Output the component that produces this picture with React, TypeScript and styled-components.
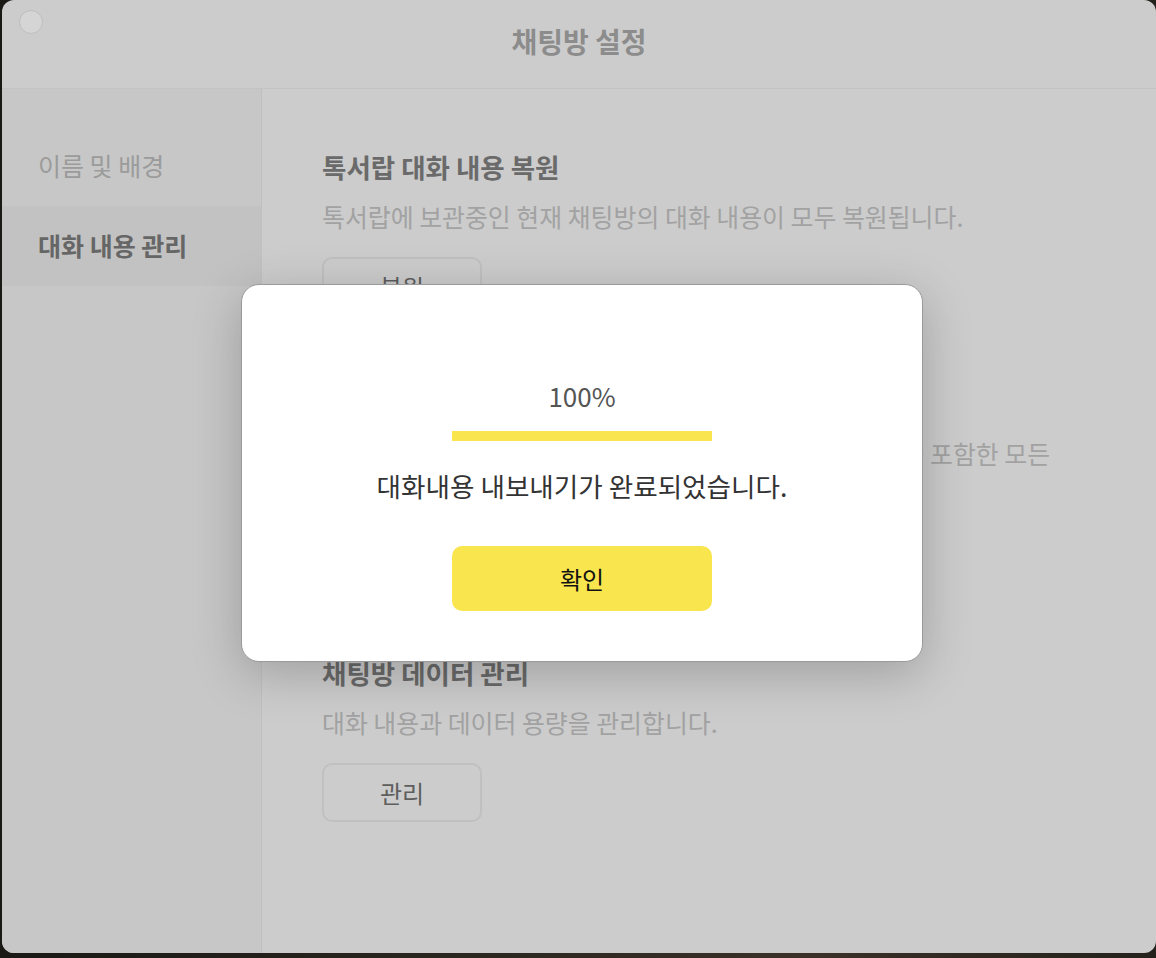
import React from 'react';
import styled, { createGlobalStyle } from 'styled-components';

const GlobalStyle = createGlobalStyle`
  html, body {
    margin: 0;
    padding: 0;
    background: #1f1c18;
  }
  body {
    font-family: "Noto Sans CJK KR", "Noto Sans", sans-serif;
    width: 1156px;
    height: 958px;
    overflow: hidden;
  }
`;

const Desktop = styled.div`
  width: 1156px;
  height: 958px;
  padding-left: 2px;
  box-sizing: border-box;
  background: linear-gradient(90deg, #1b1915 0%, #2a2620 40%, #3b3128 70%, #24211c 100%);
`;

const Window = styled.div`
  position: relative;
  width: 1154px;
  height: 953px;
  border-radius: 12px;
  overflow: hidden;
  background: #cccccc;
  display: flex;
  flex-direction: column;
`;

const TitleBar = styled.div`
  position: relative;
  height: 88px;
  flex: none;
  border-bottom: 1px solid #c3c3c3;
  display: flex;
  align-items: center;
  justify-content: center;
`;

const TrafficLight = styled.span`
  position: absolute;
  left: 17px;
  top: 10px;
  width: 22px;
  height: 22px;
  border-radius: 50%;
  background: #d5d5d5;
  border: 1px solid #bdbdbd;
`;

const Title = styled.h1`
  margin: 0 0 7px;
  font-size: 28px;
  font-weight: 700;
  color: #8c8c8c;
`;

const Body = styled.div`
  flex: 1;
  display: flex;
  min-height: 0;
`;

const Sidebar = styled.nav`
  width: 259px;
  flex: none;
  background: #c7c7c7;
  border-right: 1px solid #c0c0c0;
  padding-top: 37px;
`;

const NavItem = styled.div<{ $active?: boolean }>`
  height: 80px;
  display: flex;
  align-items: center;
  padding-left: 36px;
  padding-bottom: 3px;
  box-sizing: border-box;
  font-size: 25px;
  font-weight: ${({ $active }) => ($active ? 700 : 400)};
  color: ${({ $active }) => ($active ? '#666666' : '#9b9b9b')};
  background: ${({ $active }) => ($active ? '#c2c2c2' : 'transparent')};
`;

const Main = styled.main`
  flex: 1;
  padding: 62px 60px 0;
  display: flex;
  flex-direction: column;
  gap: 72px;
`;

const Section = styled.section`
  display: flex;
  flex-direction: column;
  align-items: flex-start;
`;

const SectionTitle = styled.h2`
  margin: 0 0 17px;
  font-size: 26.5px;
  line-height: 32px;
  font-weight: 700;
  color: #6a6a6a;
`;

const Desc = styled.p`
  margin: 0 0 25px;
  font-size: 24.9px;
  line-height: 32px;
  color: #a2a2a2;
  white-space: nowrap;
`;

const OutlineButton = styled.button`
  width: 160px;
  height: 59px;
  border: 2px solid #c0c0c0;
  border-radius: 10px;
  background: transparent;
  font-family: inherit;
  font-size: 24px;
  color: #5e5e5e;
`;

const Modal = styled.div`
  position: absolute;
  left: 239px;
  top: 284px;
  width: 682px;
  height: 378px;
  box-sizing: border-box;
  background: #ffffff;
  border: 1px solid #9a9a9a;
  border-radius: 18px;
  box-shadow: 0 12px 50px rgba(0, 0, 0, 0.22);
  display: flex;
  flex-direction: column;
  align-items: center;
  padding-top: 94px;
`;

const Percent = styled.div`
  font-size: 26px;
  line-height: 34px;
  color: #555555;
`;

const Progress = styled.div`
  width: 260px;
  height: 10px;
  margin-top: 18px;
  background: #eeeeee;
`;

const ProgressFill = styled.div`
  height: 100%;
  background: #f9e54e;
`;

const Message = styled.div`
  margin-top: 28px;
  font-size: 26.6px;
  line-height: 34px;
  color: #333333;
`;

const ConfirmButton = styled.button`
  margin-top: 43px;
  width: 260px;
  height: 65px;
  border: none;
  border-radius: 10px;
  background: #f9e54e;
  font-family: inherit;
  font-size: 24px;
  color: #111111;
`;

export default function App() {
  const progress = 100;
  return (
    <>
      <GlobalStyle />
      <Desktop>
        <Window>
          <TitleBar>
            <TrafficLight />
            <Title>채팅방 설정</Title>
          </TitleBar>
          <Body>
            <Sidebar>
              <NavItem>이름 및 배경</NavItem>
              <NavItem $active>대화 내용 관리</NavItem>
            </Sidebar>
            <Main>
              <Section>
                <SectionTitle>톡서랍 대화 내용 복원</SectionTitle>
                <Desc>톡서랍에 보관중인 현재 채팅방의 대화 내용이 모두 복원됩니다.</Desc>
                <OutlineButton>복원</OutlineButton>
              </Section>
              <Section>
                <SectionTitle>대화 내용 내보내기</SectionTitle>
                <Desc>
                  대화 내용을 텍스트 파일로 저장하거나 사진, 동영상, 파일을 포함한 모든
                  <br />
                  대화 내용을 저장할 수 있습니다.
                </Desc>
                <OutlineButton>내보내기</OutlineButton>
              </Section>
              <Section>
                <SectionTitle>채팅방 데이터 관리</SectionTitle>
                <Desc>대화 내용과 데이터 용량을 관리합니다.</Desc>
                <OutlineButton>관리</OutlineButton>
              </Section>
            </Main>
          </Body>
          <Modal>
            <Percent>{progress}%</Percent>
            <Progress>
              <ProgressFill style={{ width: `${progress}%` }} />
            </Progress>
            <Message>대화내용 내보내기가 완료되었습니다.</Message>
            <ConfirmButton>확인</ConfirmButton>
          </Modal>
        </Window>
      </Desktop>
    </>
  );
}
